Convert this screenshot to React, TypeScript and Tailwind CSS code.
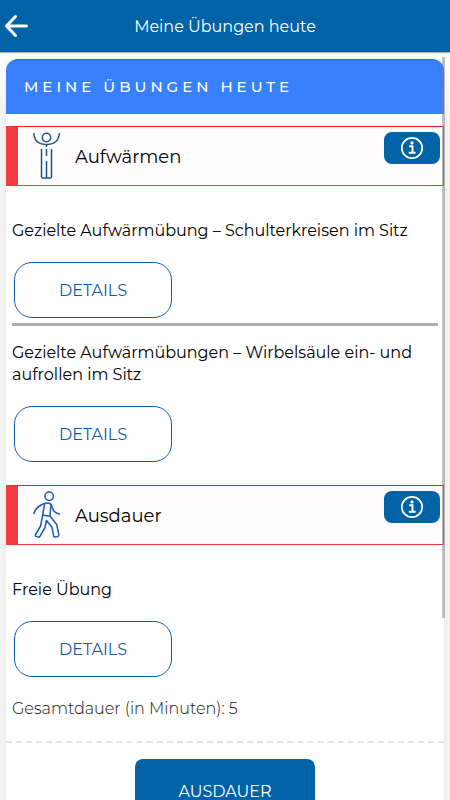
import type { ReactNode } from "react";

type Exercise = {
  title: string;
  duration?: number;
};

type Category = {
  name: string;
  icon: ReactNode;
  exercises: Exercise[];
};

function WarmupIcon() {
  return (
    <svg width="28" height="48" viewBox="0 0 28 48" fill="none" stroke="#1c5488" strokeWidth="1.5" aria-hidden="true">
      <circle cx="13.5" cy="5.5" r="4.2" />
      <path d="M.8 1C1 6 3 9.5 6.5 11.2c2 1 4 1.3 7 1.3s5-.3 7-1.3C24 9.5 26 6 26.5 1" />
      <path d="M13.5 12.5v2.5M13.5 17v7M13.5 29v17" />
      <path d="M8.5 17v27.5q0 1.5 1.5 1.5h7q1.5 0 1.5-1.5V17" />
    </svg>
  );
}

function WalkIcon() {
  return (
    <svg width="28" height="48" viewBox="0 0 28 48" fill="none" stroke="#1b5bb5" strokeWidth="1.5" strokeLinejoin="round" aria-hidden="true">
      <circle cx="16.2" cy="5.3" r="4.2" />
      <path d="M.7 23C1.8 18 4.5 15.5 10.5 12.8c2-1 5-1 7.3.2l3 7c1 1.3 3.5 2.5 6.2 3.2" />
      <path d="M11.7 12.3 9.7 24q3.5.8 7.2 1l1.2-11.8" />
      <path d="M9.7 24 7.6 35 2.5 43.5q-.6 1.5.6 1.9l2.2.7q1 .2 1.6-.8L11.8 37l1.700-7.500 5.300 6.500 1.900 9q.3 1.200 1.500 1l2.500-.5q1.400-.4 1.100-1.800L23.700 33.500 16.900 25" />
    </svg>
  );
}

function InfoIcon() {
  return (
    <svg width="24" height="24" viewBox="0 0 24 24" fill="none" stroke="currentColor" aria-hidden="true">
      <circle cx="12" cy="12" r="10.2" strokeWidth="1.8" />
      <path d="M9.2 10.2h3.3v6.3M8.8 16.7h6.8" strokeWidth="2" />
      <circle cx="12" cy="6.9" r="1.6" fill="currentColor" stroke="none" />
    </svg>
  );
}

const categories: Category[] = [
  {
    name: "Aufwärmen",
    icon: <WarmupIcon />,
    exercises: [
      { title: "Gezielte Aufwärmübung – Schulterkreisen im Sitz" },
      { title: "Gezielte Aufwärmübungen – Wirbelsäule ein- und aufrollen im Sitz" },
    ],
  },
  {
    name: "Ausdauer",
    icon: <WalkIcon />,
    exercises: [{ title: "Freie Übung", duration: 5 }],
  },
];

function CategoryHeader({ name, icon }: { name: string; icon: ReactNode }) {
  return (
    <div className="flex h-[60px] items-center border border-l-12 border-[#f23c3f] border-t-[#f01c1c] bg-[#fefcfd] pl-[15px] pr-[3px]">
      {icon}
      <h2 className="ml-[14px] flex-1 pt-0.5 text-lg text-black">{name}</h2>
      <button
        type="button"
        aria-label={`Info ${name}`}
        className="mt-[5px] flex h-8 w-14 items-center justify-center self-start rounded-lg bg-[#0063a7] text-white"
      >
        <InfoIcon />
      </button>
    </div>
  );
}

function ExerciseItem({ title, duration }: Exercise) {
  return (
    <li>
      <p className="text-base leading-[22px] text-black">{title}</p>
      <button
        type="button"
        className="ml-0.5 mt-5 h-14 w-[158px] rounded-[18px] border border-[#1259a8] bg-white pt-0.5 text-base text-[#1259a8]"
      >
        DETAILS
      </button>
      {duration !== undefined && (
        <p className="mt-[21px] text-base leading-[22px] font-light text-[#111]">
          Gesamtdauer (in Minuten): {duration}
        </p>
      )}
    </li>
  );
}

export default function App() {
  return (
    <div className="flex h-screen flex-col bg-[#f4f4f4] font-['Montserrat','Inter',sans-serif]">
      <header className="relative z-10 grid h-[52px] shrink-0 grid-cols-[1fr_auto_1fr] items-center bg-[#0063a7] text-white shadow-[0_1px_1px_rgba(0,0,0,0.3)]">
        <a href="#" aria-label="Zurück" className="ml-1 w-6">
          <svg width="24" height="24" viewBox="0 0 24 24" fill="none" stroke="currentColor" strokeWidth="3" strokeLinecap="round" strokeLinejoin="round" aria-hidden="true">
            <path d="M11.5 2.5 2.5 12l9 9.5M2.5 12h20" />
          </svg>
        </a>
        <h1 className="pt-0.5 text-base">Meine Übungen heute</h1>
      </header>

      <div className="relative min-h-0 flex-1">
        <main className="h-full overflow-y-auto bg-linear-to-b from-white to-[#f4f4f4] to-10% px-1.5 pt-[7px] [scrollbar-width:none]">
          <div className="rounded-t-xl bg-white shadow-[0_0_6px_rgba(0,0,0,0.06)]">
            <div className="flex h-[55px] items-center rounded-t-xl border-t border-[#1b6bea] bg-[#3880ff] px-[18px] text-[15px] font-medium tracking-[4px] text-white">
              MEINE ÜBUNGEN HEUTE
            </div>

            <div className="flex flex-col gap-[23px] pt-3">
              {categories.map((category) => (
                <section key={category.name}>
                  <CategoryHeader name={category.name} icon={category.icon} />
                  <ul className="mt-[34px] flex flex-col gap-[5px] px-1.5">
                    {category.exercises.map((exercise, i) => (
                      <div key={exercise.title} className="contents">
                        {i > 0 && <li role="separator" className="mb-[11px] h-[3px] bg-[#b0b0b0]" />}
                        <ExerciseItem {...exercise} />
                      </div>
                    ))}
                  </ul>
                </section>
              ))}
            </div>

            <div className="mt-[21px] flex justify-center border-t-2 border-dashed border-[#e2e2e2] pb-6 pt-4">
              <button type="button" className="h-16 w-[180px] rounded-lg bg-[#0063a7] pt-0.5 text-base text-white">
                AUSDAUER
              </button>
            </div>
          </div>
        </main>
        {/* scroll indicator */}
        <div className="pointer-events-none absolute right-[5px] top-[5px] h-3/4 w-[3px] bg-[#808080]/50" />
      </div>
    </div>
  );
}
